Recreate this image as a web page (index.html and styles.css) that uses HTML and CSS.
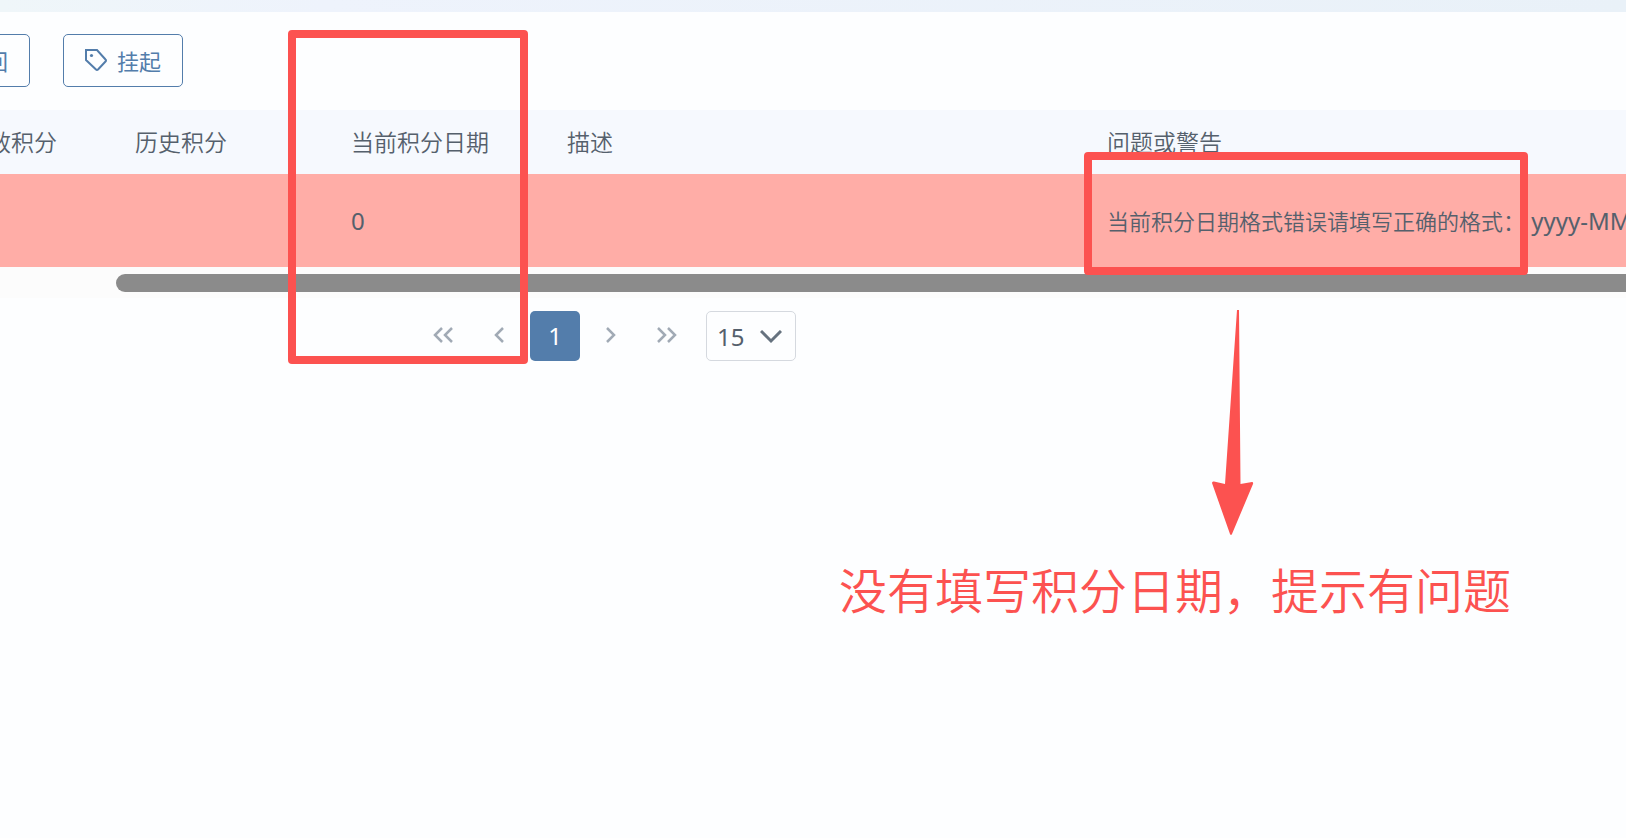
FILE: index.html
```html
<!DOCTYPE html>
<html lang="zh-CN">

<head>
  <meta charset="UTF-8">
  <meta name="viewport" content="width=device-width, initial-scale=1.0">
  <title>积分导入</title>
  <link rel="stylesheet" href="styles.css">
</head>

<body>
  <div class="topbar"></div>
  <div class="toolbar">
    <button type="button" class="btn">返回</button>
    <button type="button" class="btn">
      <svg class="tag" viewBox="0 0 22 22">
        <path d="M1 1H12L20.5 10.5Q21.5 11.5 20.5 12.5L13 20.5Q12 21.5 11 20.5L1 11Z" />
        <circle cx="6.5" cy="6.5" r="1.6" />
      </svg>
      <span>挂起</span>
    </button>
  </div>

  <div class="tableWrap">
    <table>
      <colgroup>
        <col class="narrow">
        <col class="narrow">
        <col class="narrow">
        <col class="wide">
        <col class="wide">
      </colgroup>
      <thead>
        <tr>
          <th>当前有效积分</th>
          <th>历史积分</th>
          <th>当前积分日期</th>
          <th>描述</th>
          <th>问题或警告</th>
        </tr>
      </thead>
      <tbody>
        <tr>
          <td></td>
          <td></td>
          <td>0</td>
          <td></td>
          <td><span class="message">当前积分日期格式错误请填写正确的格式：</span> yyyy-MM-dd</td>
        </tr>
      </tbody>
    </table>
    <div class="scrollbar">
      <div class="thumb"></div>
    </div>
  </div>

  <nav class="pager">
    <button type="button" aria-label="首页">
      <svg width="20" height="16" viewBox="0 0 20 16"><path d="M9 1L2 8L9 15M19 1L12 8L19 15" /></svg>
    </button>
    <button type="button" aria-label="上一页">
      <svg width="10" height="16" viewBox="0 0 10 16"><path d="M9 1L2 8L9 15" /></svg>
    </button>
    <button type="button" class="current">1</button>
    <button type="button" aria-label="下一页">
      <svg width="10" height="16" viewBox="0 0 10 16"><path d="M1 1L8 8L1 15" /></svg>
    </button>
    <button type="button" aria-label="末页">
      <svg width="20" height="16" viewBox="0 0 20 16"><path d="M1 1L8 8L1 15M11 1L18 8L11 15" /></svg>
    </button>
    <div class="pageSize">
      <select aria-label="每页条数">
        <option>15</option>
      </select>
      <svg width="22" height="14" viewBox="0 0 22 14"><path d="M1 1L11 11L21 1" /></svg>
    </div>
  </nav>

  <!-- notes drawn over the page -->
  <div class="mark markDate"></div>
  <div class="mark markMessage"></div>
  <svg class="arrow" width="42" height="226" viewBox="0 0 42 226">
    <path d="M25 0H27L28.500 174L40 172Q41.500 172 41 174L20 224Q19 226 18 224L0 173Q0 171 2 171.500L13 174Z" />
  </svg>
  <p class="note">没有填写积分日期，提示有问题</p>
</body>

</html>
```
FILE: styles.css
```css
* {
  box-sizing: border-box;
}

body {
  position: relative;
  margin: 0;
  min-height: 100vh;
  overflow: hidden;
  background-color: #fdfeff;
  color: #55606c;
  font-family: "Noto Sans", "Noto Sans CJK SC", sans-serif;
  font-size: 24px;
}

button, select {
  font-family: inherit;
  cursor: pointer;
}

.topbar {
  height: 12px;
  background: linear-gradient(90deg, #eff6f9, #eef3fc 20%, #e9f1f8);
}

.toolbar {
  display: flex;
  gap: 33px;
  margin-left: -90px;
  padding: 22px 0 23px;
}

.btn {
  display: flex;
  align-items: center;
  justify-content: flex-end;
  gap: 10px;
  width: 120px;
  height: 53px;
  padding: 0 21px 2px;
  border: 1px solid #537dab;
  border-radius: 5px;
  background-color: transparent;
  color: #537dab;
  font-size: 22px;
}

.tag {
  width: 22px;
  height: 22px;
  fill: none;
  stroke: #537dab;
  stroke-width: 2;
}

.tag circle {
  fill: #537dab;
  stroke: none;
}

.tableWrap {
  overflow: hidden;
}

table {
  width: calc(100% + 102px);
  min-width: 1728px;
  margin-left: -99px;
  table-layout: fixed;
  border-collapse: collapse;
}

.narrow {
  width: 216px;
}

.wide {
  width: 540px;
}

th, td {
  padding: 0 18px;
  text-align: left;
  white-space: nowrap;
}

th {
  height: 64px;
  padding-bottom: 2px;
  background-color: #f6f9fe;
  font-size: 23px;
  font-weight: 350;
}

td {
  height: 93px;
  background-color: #ffada7;
}

.message {
  font-size: 22px;
  font-weight: 350;
}

.scrollbar {
  height: 31px;
  padding: 7px 0 6px 116px;
  background-color: #fcfcfc;
}

.thumb {
  height: 18px;
  border-radius: 9px 0 0 9px;
  background-color: #8b8b8b;
}

.pager {
  display: flex;
  gap: 6px;
  padding: 13px 0 0 418px;
}

.pager button {
  display: flex;
  align-items: center;
  justify-content: center;
  width: 50px;
  height: 50px;
  padding: 0 0 2px;
  border: none;
  border-radius: 5px;
  background-color: transparent;
}

.pager svg {
  fill: none;
  stroke: #a1aab5;
  stroke-width: 2.5;
}

.pager .current {
  background-color: #537dab;
  color: #fff;
  font-size: 24px;
}

.pageSize {
  position: relative;
  margin-left: 8px;
}

.pageSize select {
  width: 90px;
  height: 50px;
  padding: 0 10px;
  appearance: none;
  border: 1px solid #d5d9df;
  border-radius: 5px;
  background-color: transparent;
  color: #55606c;
  font-size: 24px;
}

.pageSize svg {
  position: absolute;
  top: 19px;
  right: 14px;
  stroke: #66727f;
  stroke-width: 3;
  pointer-events: none;
}

.mark {
  position: absolute;
  border: 8px solid #fc5250;
  border-radius: 4px;
}

.markDate {
  left: 288px;
  top: 30px;
  width: 240px;
  height: 334px;
}

.markMessage {
  left: 1084px;
  top: 152px;
  width: 444px;
  height: 123px;
}

.arrow {
  position: absolute;
  left: 1212px;
  top: 310px;
  fill: #fc5250;
}

.note {
  position: absolute;
  left: 839px;
  top: 555px;
  margin: 0;
  color: #fc5250;
  font-size: 48px;
  font-weight: 350;
  line-height: 72px;
  white-space: nowrap;
}
```
